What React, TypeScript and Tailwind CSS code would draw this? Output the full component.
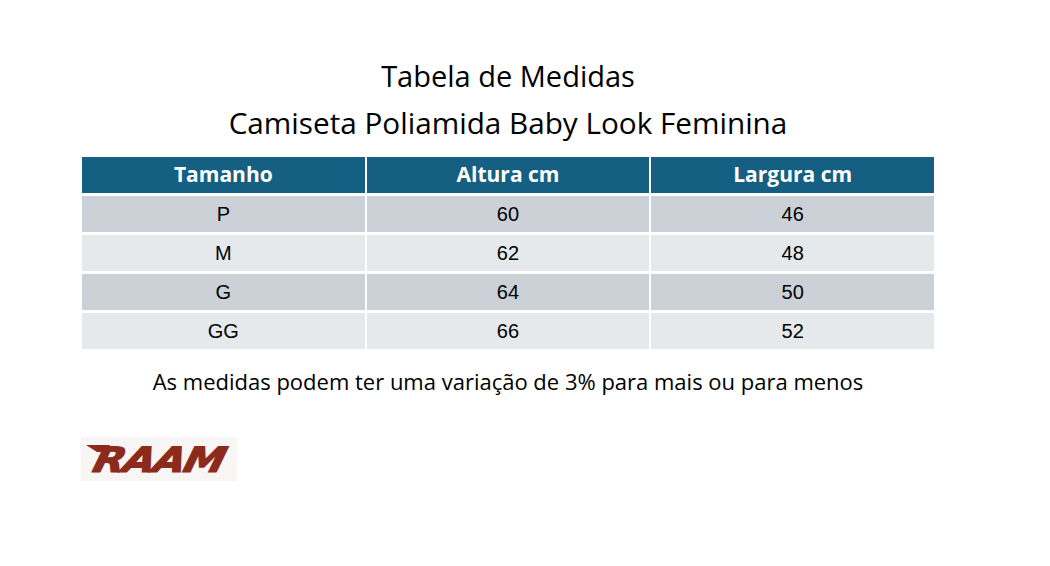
import React from 'react';

const rows = [
  ['P', '60', '46'],
  ['M', '62', '48'],
  ['G', '64', '50'],
  ['GG', '66', '52'],
];

export default function App() {
  return (
    <div className="w-[1050px] h-[566px] bg-white relative overflow-hidden">
      <div className="absolute left-[82px] top-[58px] w-[852px] flex flex-col items-center text-black font-['Open_Sans',sans-serif]">
        <div className="text-[29px] leading-[36px] h-[36px]">Tabela de Medidas</div>
        <div className="text-[29.7px] leading-[36px] mt-[11px]">Camiseta Poliamida Baby Look Feminina</div>
      </div>

      <div className="absolute left-[82px] top-[157px] w-[852px] grid grid-cols-3 gap-x-[2px] gap-y-[3px] font-['Liberation_Sans',sans-serif]">
        <div className="h-9 bg-[#156082] text-white font-bold text-[21px] flex items-center justify-center font-['Open_Sans',sans-serif]">Tamanho</div>
        <div className="h-9 bg-[#156082] text-white font-bold text-[21px] flex items-center justify-center font-['Open_Sans',sans-serif]">Altura cm</div>
        <div className="h-9 bg-[#156082] text-white font-bold text-[21px] flex items-center justify-center font-['Open_Sans',sans-serif]">Largura cm</div>
        {rows.map((r, i) =>
          r.map((c, j) => (
            <div
              key={i + '-' + j}
              className={
                'h-9 flex items-center justify-center text-[20px] text-black ' +
                (i % 2 === 0 ? 'bg-[#ccd1d8]' : 'bg-[#e6e9ec]')
              }
            >
              {c}
            </div>
          ))
        )}
      </div>

      <div className="absolute left-0 top-[366px] w-[1016px] text-center text-[22px] leading-[30px] text-black font-['Open_Sans',sans-serif]">
        As medidas podem ter uma variação de 3% para mais ou para menos
      </div>

      <div className="absolute left-[81px] top-[437px] w-[156px] h-[44px] bg-[#f8f6f4] flex items-center justify-center">
        <span className="relative top-[1px] text-[#8c2a1c] font-bold italic text-[35px] leading-none tracking-[-1.5px] scale-x-[1.18] -skew-x-12 [-webkit-text-stroke:1.2px_#8c2a1c] font-['DejaVu_Sans',sans-serif]">
          RAAM
        </span>
        <svg className="absolute left-[5px] top-[8px]" width="24" height="9" viewBox="0 0 24 9">
          <polygon points="0,0 24,0 21,7 11,7" fill="#8c2a1c" />
        </svg>
      </div>
    </div>
  );
}
